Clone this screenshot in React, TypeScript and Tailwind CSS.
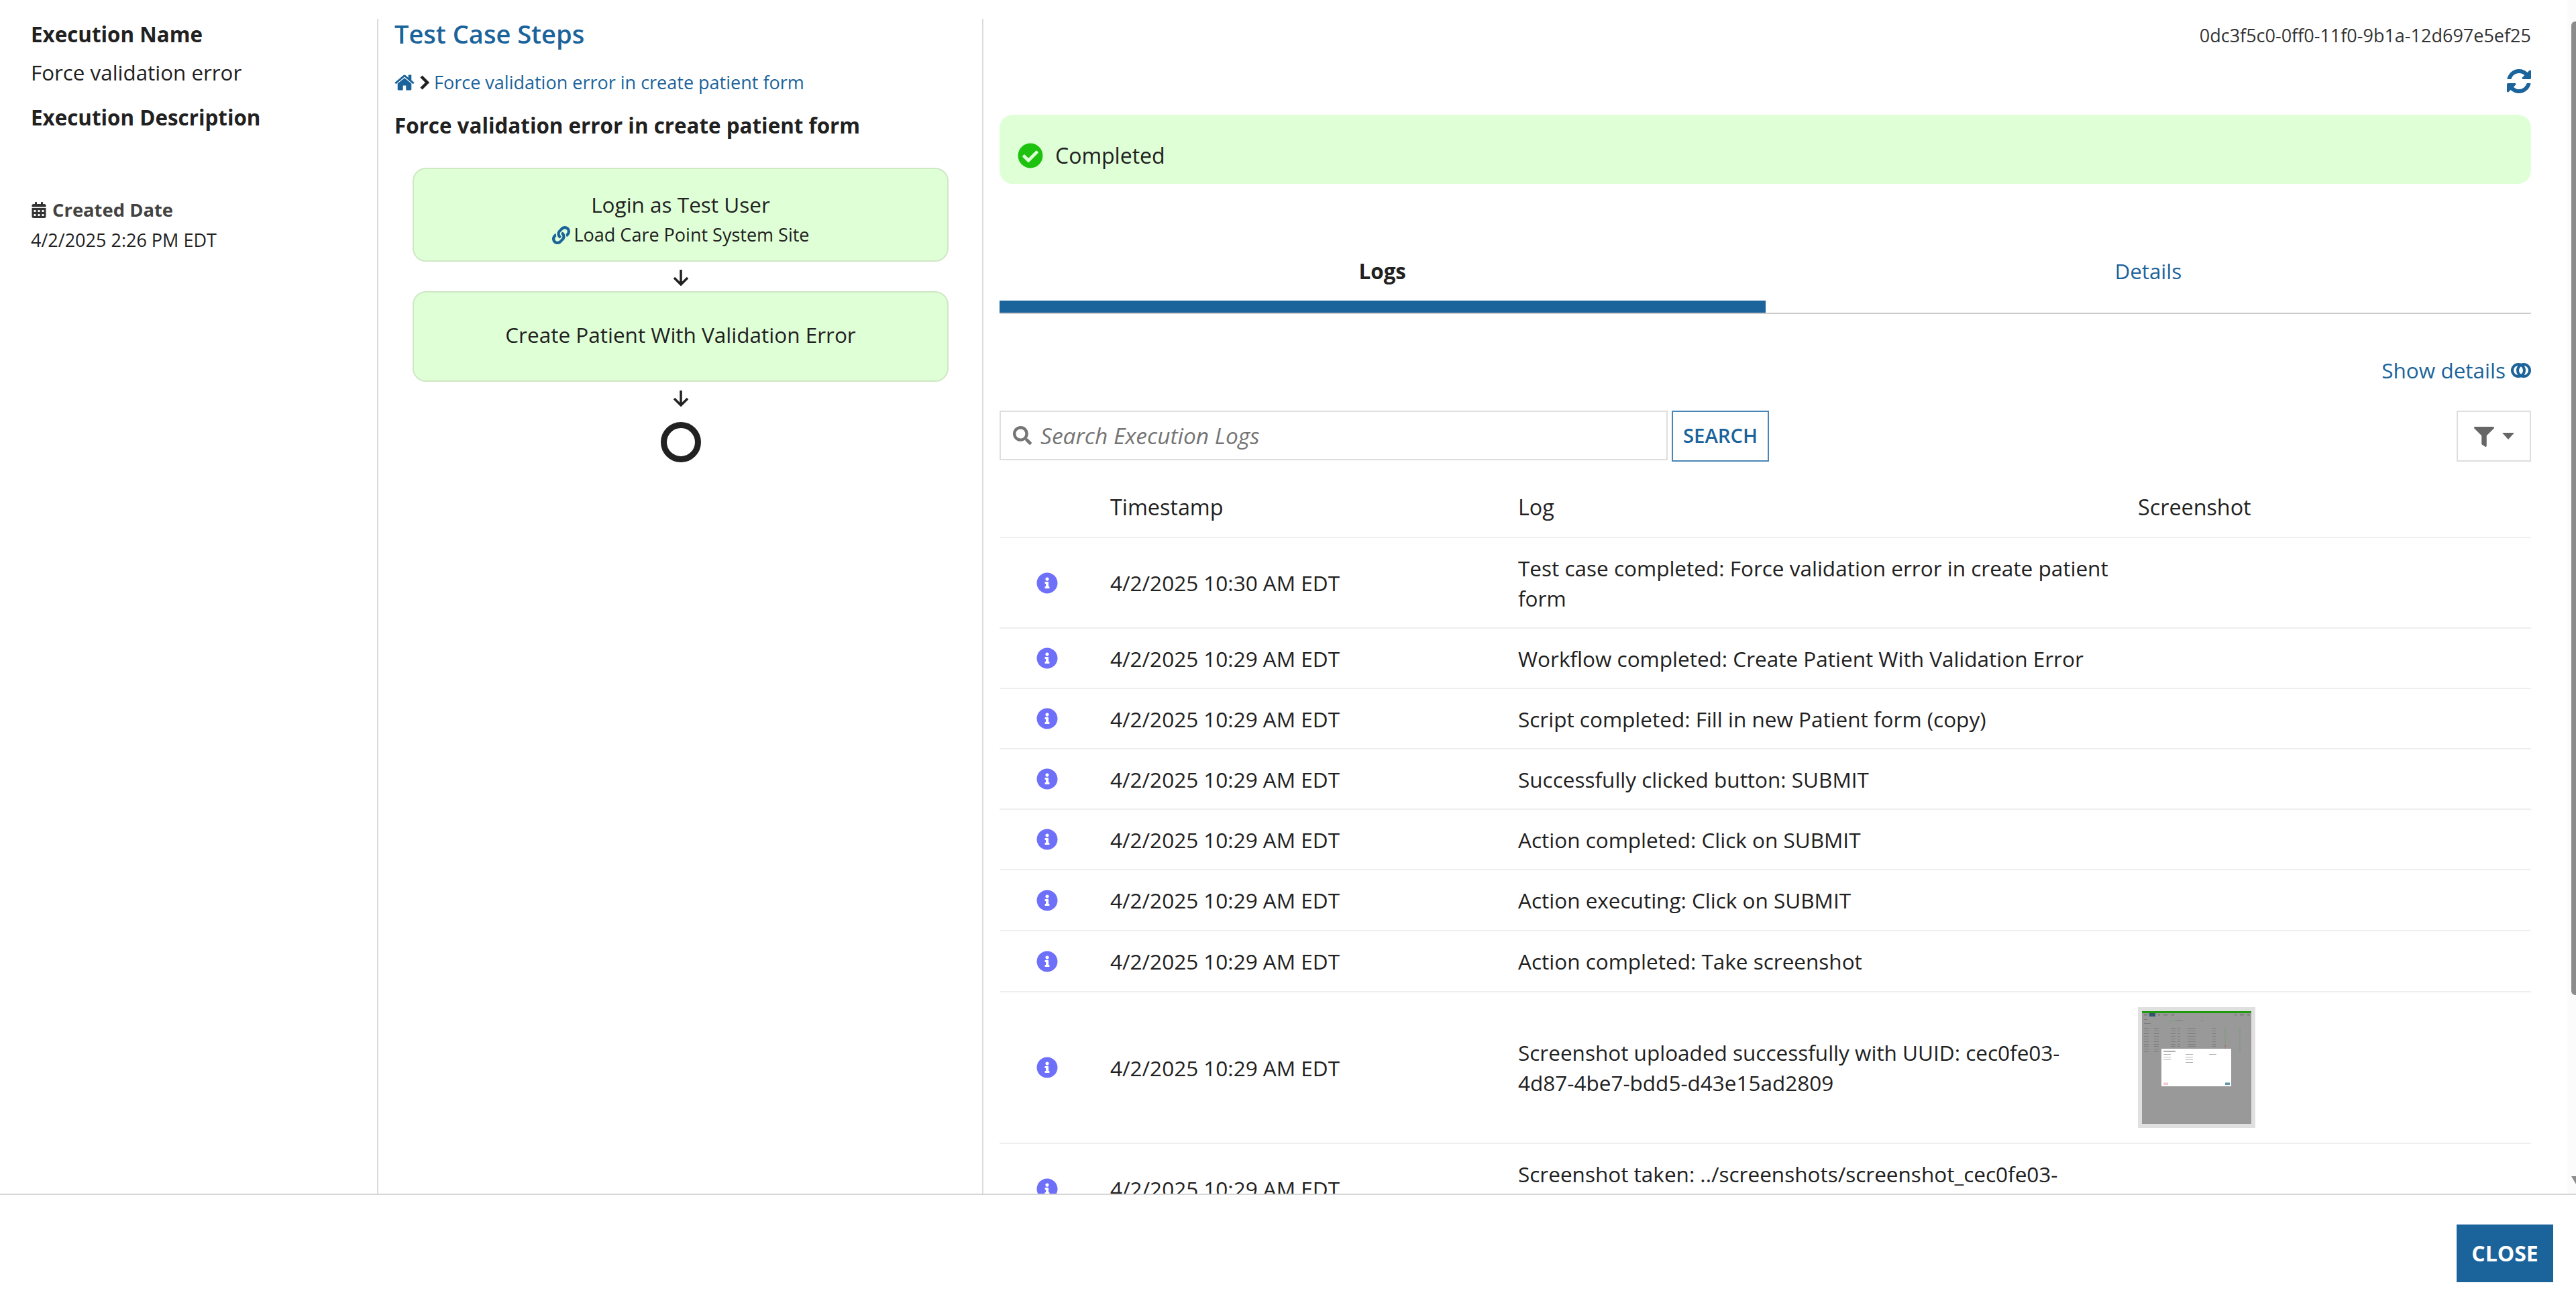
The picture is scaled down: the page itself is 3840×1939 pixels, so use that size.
import { FaCalendarAlt, FaCheckCircle, FaFilter, FaInfoCircle, FaLink, FaSearch } from 'react-icons/fa'

const font = { fontFamily: '"Open Sans", sans-serif' }

const logs = [
  { time: '4/2/2025 10:30 AM EDT', text: 'Test case completed: Force validation error in create patient form', h: 'h-[135px]' },
  { time: '4/2/2025 10:29 AM EDT', text: 'Workflow completed: Create Patient With Validation Error', h: 'h-[90px]' },
  { time: '4/2/2025 10:29 AM EDT', text: 'Script completed: Fill in new Patient form (copy)', h: 'h-[90px]' },
  { time: '4/2/2025 10:29 AM EDT', text: 'Successfully clicked button: SUBMIT', h: 'h-[90px]' },
  { time: '4/2/2025 10:29 AM EDT', text: 'Action completed: Click on SUBMIT', h: 'h-[90px]' },
  { time: '4/2/2025 10:29 AM EDT', text: 'Action executing: Click on SUBMIT', h: 'h-[91px]' },
  { time: '4/2/2025 10:29 AM EDT', text: 'Action completed: Take screenshot', h: 'h-[91px]' },
  { time: '4/2/2025 10:29 AM EDT', text: 'Screenshot uploaded successfully with UUID: cec0fe03-4d87-4be7-bdd5-d43e15ad2809', h: 'h-[226px]', shot: true },
  { time: '4/2/2025 10:29 AM EDT', text: 'Screenshot taken: ../screenshots/screenshot_cec0fe03-4d87-4be7-bdd5-d43e15ad2809.png', h: 'h-[135px]' },
]

// font awesome 4 glyphs, react-icons only ships the newer shapes
const homePath = 'M1472 992v480q0 26-19 45t-45 19h-384v-384h-256v384h-384q-26 0-45-19t-19-45v-480q0-1 .5-3t.5-3l575-474 575 474q1 2 1 6zm223-69l-62 74q-8 9-21 11h-3q-13 0-21-7l-692-577-692 577q-12 8-24 7-13-2-21-11l-62-74q-8-10-7-23.5t11-21.5l719-599q32-26 76-26t76 26l244 204v-195q0-14 9-23t23-9h192q14 0 23 9t9 23v408l219 182q10 8 11 21.5t-7 23.5z'
const refreshPath = 'M1639 1056q0 5-1 7-64 268-268 434.5t-478 166.5q-146 0-282.5-55t-243.5-157l-129 129q-19 19-45 19t-45-19-19-45v-448q0-26 19-45t45-19h448q26 0 45 19t19 45-19 45l-137 137q71 66 161 102t187 36q134 0 250-65t186-179q11-17 53-117 8-23 30-23h192q13 0 22.5 9.5t9.5 22.5zm25-800v448q0 26-19 45t-45 19h-448q-26 0-45-19t-19-45 19-45l138-138q-148-137-349-137-134 0-250 65t-186 179q-11 17-53 117-8 23-30 23h-199q-13 0-22.5-9.5t-9.5-22.5v-7q65-268 270-434.5t480-166.5q146 0 284 55.5t245 156.5l130-129q19-19 45-19t45 19 19 45z'

function Fa4({ d, className }: { d: string; className?: string }) {
  return (
    <svg viewBox="0 0 1792 1792" className={className} fill="currentColor">
      <path d={d} />
    </svg>
  )
}

function DownArrow() {
  return (
    <svg viewBox="0 0 24 24" className="w-[24px] h-[24px]" fill="none" stroke="#212121" strokeWidth="3.5">
      <path d="M12 0v22M2 12l10 10 10-10" />
    </svg>
  )
}

const thumbRows = [25, 29, 33, 37, 41, 45, 49, 52, 56, 60]
const thumbCols = [[3, 7], [18, 7], [43, 7], [53, 4], [68, 12], [105, 5]]

// tiny shrunken screenshot of the app with the modal open
function Thumbnail() {
  return (
    <div className="w-[175px] h-[180px] bg-[#e0e0e0] p-[6px]">
      <svg viewBox="0 0 163 168" className="w-full h-full block" style={{ filter: 'blur(0.5px)' }}>
        <rect width="163" height="168" fill="#999999" />
        <rect width="163" height="3" fill="#1f9a0e" />
        <rect x="11" y="3" width="9" height="5" fill="#33566f" />
        {[[3, 5], [24, 3], [32, 6], [44, 4], [138, 3], [146, 6], [157, 4]].map(([x, w]) => (
          <rect key={x} x={x} y="4.5" width={w} height="2" fill="#7c7c7c" />
        ))}
        <rect x="3" y="12" width="5" height="1" fill="#7c7c7c" />
        <rect x="3" y="18" width="10" height="1" fill="#7c7c7c" />
        <rect x="41" y="13" width="6" height="3" fill="#87a088" />
        <rect x="49" y="14" width="12" height="1" fill="#7c7c7c" />
        <rect x="88" y="14" width="3" height="1" fill="#7c7c7c" />
        {thumbRows.map(y => (
          <g key={y}>
            {thumbCols.map(([x, w]) => (
              <rect key={x} x={x} y={y} width={w} height="1" fill="#7e7e7e" />
            ))}
            <rect x="123" y={y - 0.5} width="2" height="2" fill={y % 2 ? '#7f9a7f' : '#a56f6f'} />
            <rect x="145" y={y - 0.5} width="2" height="2" fill="#7f9a7f" />
          </g>
        ))}
        <rect x="29" y="56" width="104" height="56" fill="#ffffff" />
        <rect x="32" y="59" width="18" height="1.5" fill="#8a8a8a" />
        {[[32, 64], [65, 64], [100, 64], [32, 68], [65, 68], [32, 72], [65, 72], [65, 76]].map(([x, y]) => (
          <rect key={`${x}-${y}`} x={x} y={y} width="11" height="1" fill="#b5b5b5" />
        ))}
        <rect x="32" y="106.5" width="7" height="3.5" fill="#f6c9d0" />
        <rect x="124" y="106.5" width="7" height="3.5" fill="#5f97a8" />
      </svg>
    </div>
  )
}

export default function App() {
  return (
    <div className="h-screen flex flex-col bg-white text-[#212121] overflow-hidden" style={font}>
      <div className="flex-1 min-h-0 flex pt-[28px] relative">
        {/* Execution info */}
        <div className="w-[564px] shrink-0 border-r-2 border-[#dcdcdc] pl-[46px] text-[31.35px]">
          <div className="font-bold leading-[46px]">Execution Name</div>
          <div className="mt-[11px] leading-[46px]">Force validation error</div>
          <div className="mt-[21px] font-bold leading-[46px]">Execution Description</div>
          <div className="mt-[95px] flex items-center gap-[8px] text-[27.4px] font-bold leading-[40px] text-[#424242]">
            <FaCalendarAlt className="text-[24px] text-[#333333]" />
            Created Date
          </div>
          <div className="mt-[5px] text-[27px] leading-[40px]">4/2/2025 2:26 PM EDT</div>
        </div>

        {/* Steps */}
        <div className="w-[902px] shrink-0 border-r-2 border-[#dcdcdc] pl-[24px] pr-[50px]">
          <div className="text-[38px] font-semibold leading-[44px] text-[#1b639b]">Test Case Steps</div>
          <div className="mt-[31px] flex items-center text-[27px] leading-[40px] text-[#1b639b]">
            <Fa4 d={homePath} className="w-[32px] h-[32px] -ml-[1px]" />
            <svg viewBox="0 0 15 22" className="w-[15px] h-[22px] ml-[7px] mr-[6px]" fill="none" stroke="#212121" strokeWidth="4.5">
              <path d="M2 2l9 9-9 9" />
            </svg>
            <span>Force validation error in create patient form</span>
          </div>
          <div className="mt-[21px] text-[31.35px] font-bold leading-[46px]">Force validation error in create patient form</div>
          <div className="ml-[27px] mt-[40px] flex flex-col items-center">
            <div className="w-full h-[140px] pt-[12px] flex flex-col items-center justify-center rounded-[20px] border-2 border-[#cfe8c4] bg-[#dfffd6]">
              <div className="text-[31.5px] leading-[46px]">Login as Test User</div>
              <div className="flex items-center gap-[6px] text-[27px] leading-[40px] mt-[2px]">
                <FaLink className="text-[27px] text-[#1b639b]" />
                Load Care Point System Site
              </div>
            </div>
            <div className="mt-[12px] mb-[8px]"><DownArrow /></div>
            <div className="w-full h-[135px] pb-[6px] flex items-center justify-center rounded-[20px] border-2 border-[#cfe8c4] bg-[#dfffd6] text-[31.5px]">
              Create Patient With Validation Error
            </div>
            <div className="mt-[13px]"><DownArrow /></div>
            <div className="mt-[23px] w-[60px] h-[60px] rounded-full border-[9px] border-[#212121]" />
          </div>
        </div>

        {/* Execution result */}
        <div className="flex-1 min-w-0 pl-[24px] pr-[67px] overflow-hidden">
          <div className="text-right text-[27px] leading-[40px] text-[#333333] mt-[5px]">0dc3f5c0-0ff0-11f0-9b1a-12d697e5ef25</div>
          <div className="flex justify-end mt-[27px] -mr-[3px]">
            <Fa4 d={refreshPath} className="w-[42px] h-[42px] text-[#1b639b]" />
          </div>
          <div className="mt-[29px] h-[103px] rounded-[20px] bg-[#dfffd6] flex items-center gap-[18px] pl-[27px] pt-[18px] text-[32px]">
            <FaCheckCircle className="text-[38px] text-[#1cc20d]" />
            Completed
          </div>

          <div className="mt-[104px] flex">
            <div className="flex-1 flex flex-col">
              <div className="h-[70px] flex items-start justify-center text-[31.35px] font-bold leading-[52px]">Logs</div>
              <div className="h-[18px] bg-[#1b639b]" />
              <div className="h-[2px] bg-[#cccccc]" />
            </div>
            <div className="flex-1 flex flex-col">
              <div className="h-[88px] flex items-start justify-center text-[31.35px] leading-[52px] text-[#1b639b]">Details</div>
              <div className="h-[2px] bg-[#cccccc]" />
            </div>
          </div>

          <div className="mt-[62px] flex justify-end items-center gap-[8px] text-[31.5px] leading-[44px] text-[#1b639b]">
            Show details
            <svg viewBox="0 0 30 22" className="w-[30px] h-[22px]" fill="none" stroke="#1b639b" strokeWidth="4">
              <circle cx="11" cy="11" r="9" />
              <circle cx="19" cy="11" r="9" />
            </svg>
          </div>

          <div className="mt-[38px] h-[76px] flex items-stretch">
            <div className="w-[996px] h-[74px] border-2 border-[#dedede] flex items-center gap-[13px] pl-[18px] text-[33.5px] italic text-[#757575]">
              <FaSearch className="text-[28px] text-[#757575]" />
              Search Execution Logs
            </div>
            <div className="ml-[6px] w-[145px] border-2 border-[#4a86b5] flex items-center justify-center text-[29.3px] font-semibold text-[#1b639b]">SEARCH</div>
            <div className="ml-auto w-[111px] border-2 border-[#dedede] flex items-center justify-center gap-[12px] text-[#666666]">
              <FaFilter className="text-[30px] mt-[2px]" />
              <svg viewBox="0 0 18 10" className="w-[18px] h-[10px]" fill="currentColor">
                <path d="M0 0h18l-9 10z" />
              </svg>
            </div>
          </div>

          {/* Log table */}
          <div className="mt-[26px]">
            <div className="grid grid-cols-[165px_608px_924px_1fr] h-[88px] pb-[3px] items-center border-b-2 border-[#efefef] text-[32.3px] font-medium">
              <div />
              <div>Timestamp</div>
              <div>Log</div>
              <div>Screenshot</div>
            </div>
            {logs.map((log, i) => (
              <div key={i} className={`grid grid-cols-[165px_608px_924px_1fr] items-center border-b-2 border-[#efefef] text-[31.5px] leading-[45px] ${log.h}`}>
                <div className="pl-[55px]">
                  <FaInfoCircle className="text-[32px] text-[#6f70fa]" />
                </div>
                <div>{log.time}</div>
                <div className="pr-[40px]">{log.text}</div>
                <div>{log.shot && <Thumbnail />}</div>
              </div>
            ))}
          </div>
        </div>

        {/* Scrollbar */}
        <div className="absolute right-0 top-0 bottom-0 w-[13px] bg-[#fbfbfb]">
          <div className="absolute right-0 top-[32px] w-[7px] h-[1451px] rounded-l-[6px] bg-[#8c8c8c]" />
          <svg viewBox="0 0 7 12" className="absolute right-0 top-[1753px] w-[7px] h-[12px]" fill="#8c8c8c">
            <path d="M0 0h7v12z" />
          </svg>
        </div>
      </div>

      {/* Footer */}
      <div className="h-[160px] shrink-0 border-t-2 border-[#d6d6d6] flex justify-end items-center pr-[34px]">
        <div className="w-[144px] h-[86px] mt-[16px] bg-[#1b639b] text-white text-[32px] font-bold flex items-center justify-center">CLOSE</div>
      </div>
    </div>
  )
}
